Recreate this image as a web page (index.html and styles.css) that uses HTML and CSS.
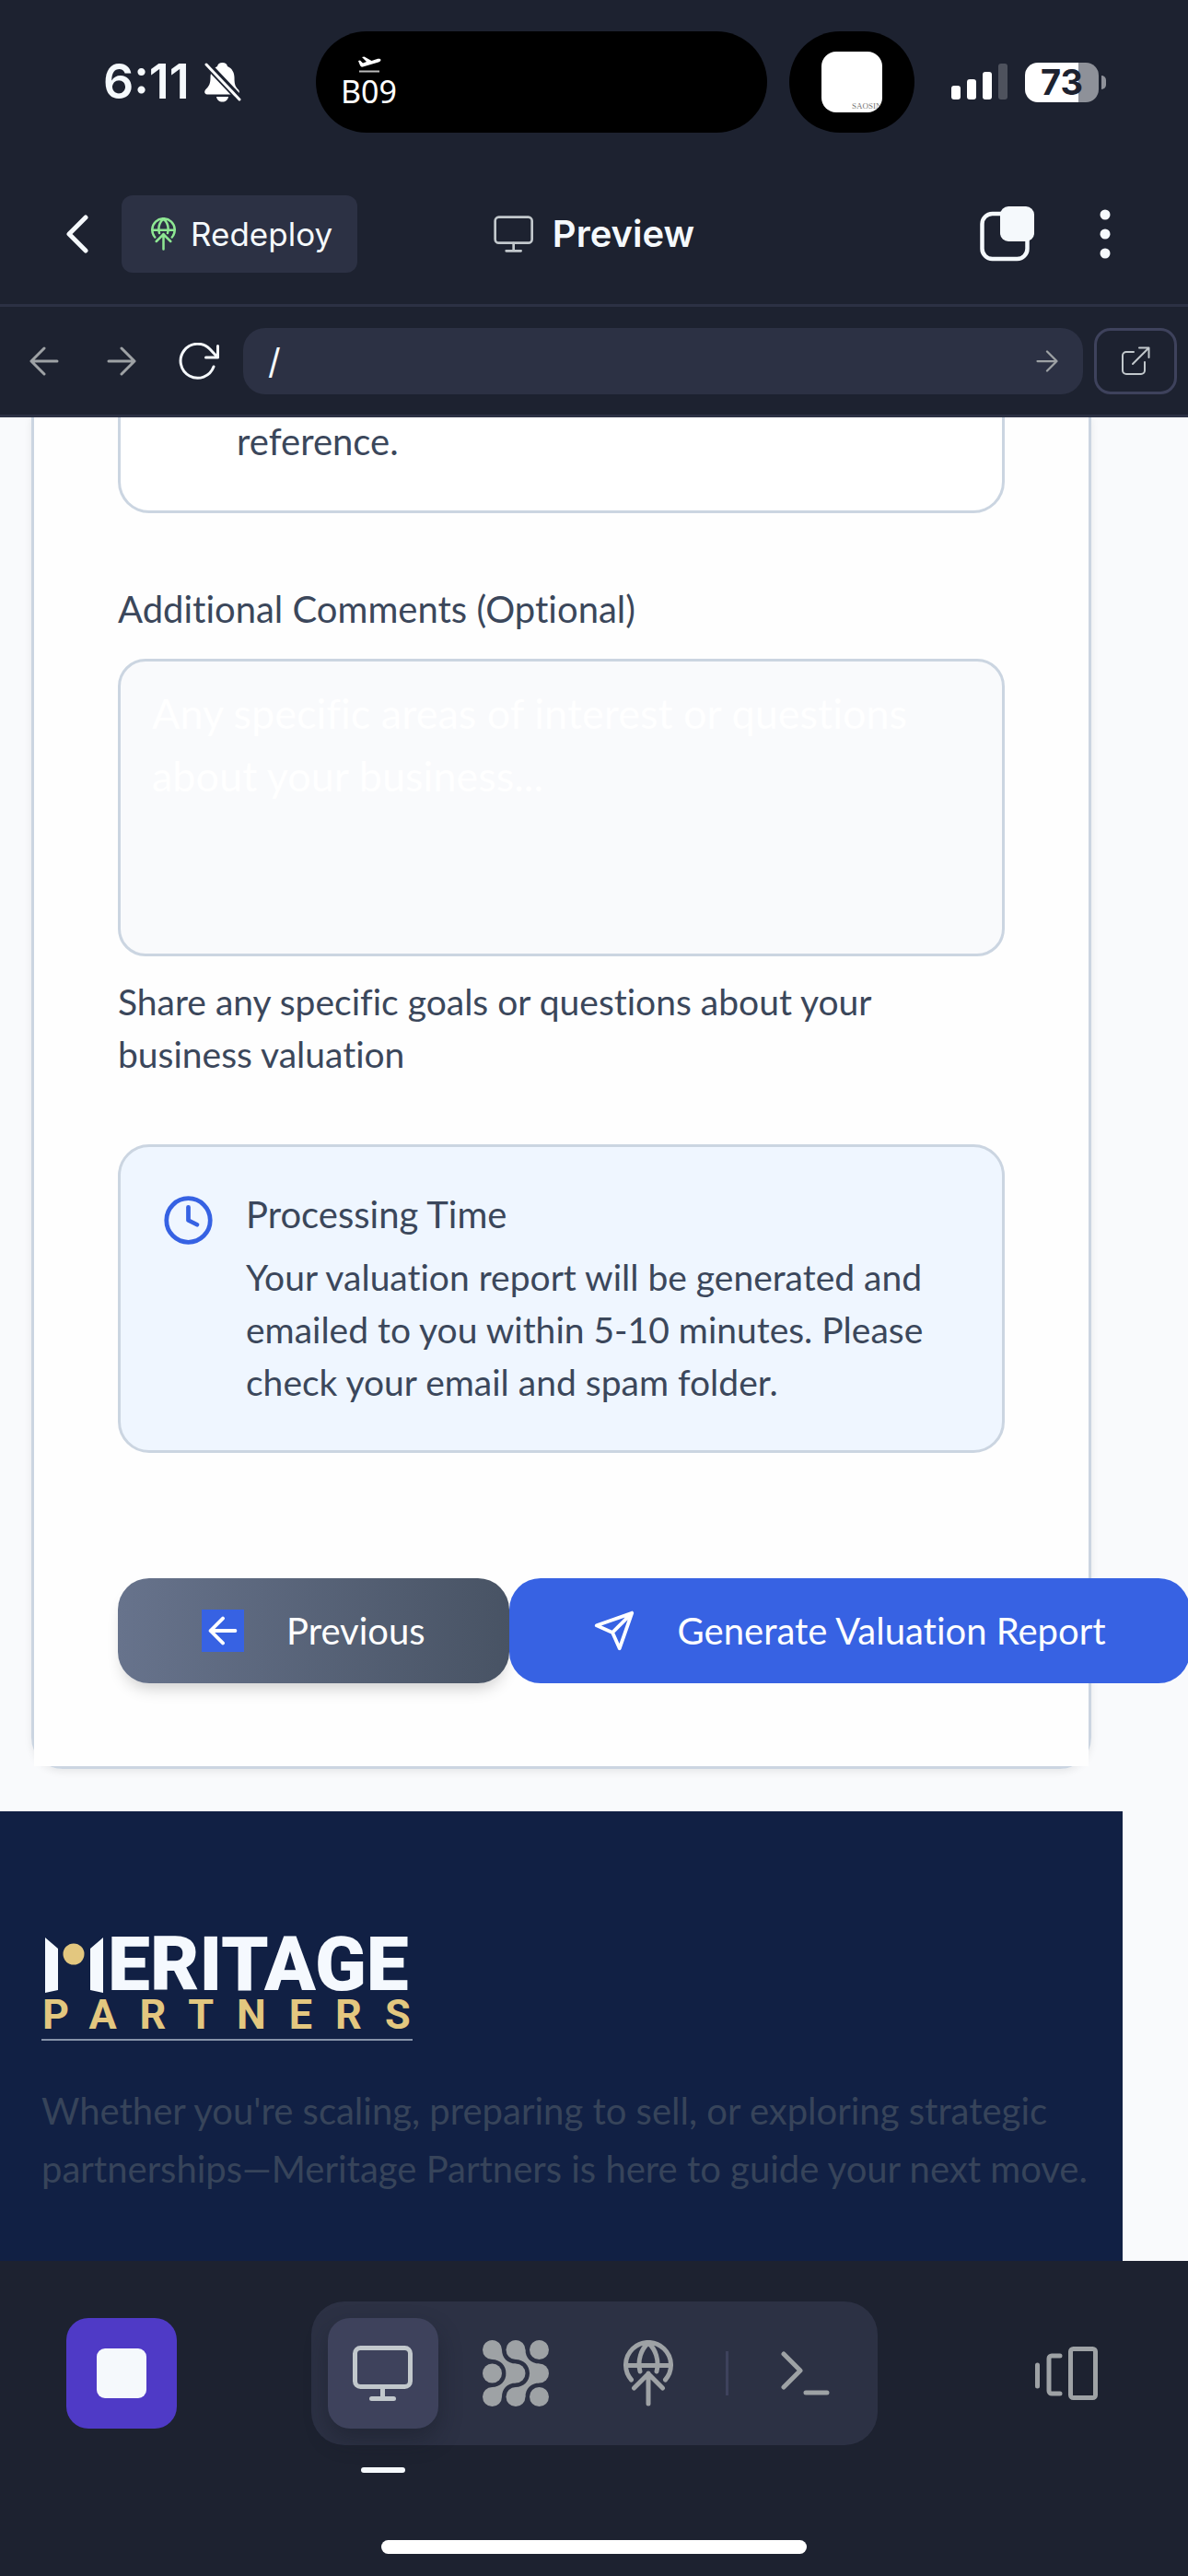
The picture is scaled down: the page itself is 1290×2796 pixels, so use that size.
FILE: index.html
```html
<!DOCTYPE html>
<html lang="en">
<head>
<meta charset="utf-8">
<meta name="viewport" content="width=device-width, initial-scale=1">
<title>Preview</title>
<link rel="stylesheet" href="styles.css">
</head>
<body>
<svg class="defs" aria-hidden="true">
  <symbol id="monitor" viewBox="0 0 66 60">
    <rect x="2.5" y="2.5" width="60" height="42" rx="6"/>
    <path d="M32.5 45v12M20.500 57.500h24"/>
  </symbol>
  <symbol id="globe-up" viewBox="0 0 54 72">
    <path d="M8.500 43A24.500 24.500 0 1 1 45.500 43M2.500 27.500h49M18 34C15 22 19 10 27 3c8 7 12 19 9 31M27 69V36M11.500 52 27 36.500 42.500 52"/>
  </symbol>
  <symbol id="arrow-left" viewBox="0 0 32 32">
    <path d="M30 16H2M16 2 2 16l14 14"/>
  </symbol>
  <symbol id="arrow-right" viewBox="0 0 32 32">
    <path d="M2 16h28M16 2l14 14-14 14"/>
  </symbol>
</svg>

<div class="status">
  <div class="status-time">
    <span>6:11</span>
    <svg class="bell" viewBox="0 0 40 44" aria-hidden="true">
      <path fill="#fff" d="M19.500 1c3 0 5 1.500 5.500 4 5 2 7.500 7 7.500 12 0 8 1 10 4.500 13.500 1.500 1.500 1 5-2 5H3c-3 0-3.500-3-2-5C5 26.500 6.500 24 6.500 17c0-5 2.500-10 7.500-12 .5-2.500 2.500-4 5.500-4zM13 38h13c-.5 3.500-3 5.500-6.500 5.500S13.500 41.500 13 38z"/>
      <path stroke="#1d2230" stroke-width="8" d="M1 1l38 40"/>
      <path stroke="#fff" stroke-width="3" stroke-linecap="round" d="M2 3l36 38"/>
    </svg>
  </div>
  <div class="islands">
    <div class="island island-main">
      <div class="flight">
        <svg class="plane" viewBox="0 0 26 18" aria-hidden="true">
          <path fill="#fff" d="M1 5l2-.5 3 3L10 6 5 1l2.500-.5 8 4.500 6-2c2-.6 4 0 4 1 0 1.200-1 2-2.500 2.500L6 11.500C4.500 12 3.500 11 3 10z"/>
          <path fill="#bbb" d="M2 15.500h22v2H2z"/>
        </svg>
        <span>B09</span>
      </div>
    </div>
    <div class="island island-side"><div class="album"><span>SAOSIN</span></div></div>
  </div>
  <div class="status-right">
    <svg class="signal" viewBox="0 0 62 40" aria-hidden="true">
      <g fill="#fff"><rect y="24" width="10" height="15" rx="3"/><rect x="17" y="17" width="10" height="22" rx="3"/><rect x="34" y="9" width="10" height="30" rx="3"/><rect x="51" width="10" height="39" rx="3" opacity=".22"/></g>
    </svg>
    <div class="battery"><span>73</span></div>
  </div>
</div>

<header class="header">
  <div class="header-left">
    <button class="icon-button back" aria-label="Back">
      <svg viewBox="0 0 24 42" width="24" height="42"><path d="M21 3 3 21l18 18" stroke-width="5"/></svg>
    </button>
    <button class="redeploy">
      <svg class="green" width="27" height="36" stroke-width="5"><use href="#globe-up"/></svg>
      <span>Redeploy</span>
    </button>
  </div>
  <h1 class="title">
    <svg width="44" height="40" stroke-width="4"><use href="#monitor"/></svg>
    <span>Preview</span>
  </h1>
  <div class="header-right">
    <button class="icon-button" aria-label="Duplicate">
      <svg viewBox="0 0 60 60" width="60" height="60"><rect x="2.500" y="8" width="49" height="49" rx="11" stroke-width="4.500"/><rect x="22" y="0" width="37" height="38" rx="9" fill="#f5f9fc" stroke="none"/></svg>
    </button>
    <button class="icon-button" aria-label="More">
      <svg viewBox="0 0 12 54" width="12" height="54"><g fill="#f5f9fc" stroke="none"><circle cx="6" cy="6" r="5.500"/><circle cx="6" cy="27" r="5.500"/><circle cx="6" cy="48" r="5.500"/></g></svg>
    </button>
  </div>
</header>

<nav class="address">
  <button class="icon-button dim" aria-label="Go back"><svg width="32" height="32" stroke-width="3"><use href="#arrow-left"/></svg></button>
  <button class="icon-button dim" aria-label="Go forward"><svg width="32" height="32" stroke-width="3"><use href="#arrow-right"/></svg></button>
  <button class="icon-button" aria-label="Reload"><svg viewBox="0 0 44 40" width="44" height="40" stroke-width="3"><path d="M38 26A18.500 18.500 0 1 1 34 7l8.500 9M42.500 3.500V16H29.500"/></svg></button>
  <div class="url">
    <input type="text" value="/" aria-label="Path">
    <button class="icon-button dim" aria-label="Go"><svg width="24" height="24" stroke-width="3"><use href="#arrow-right"/></svg></button>
  </div>
  <button class="external" aria-label="Open in new tab">
    <svg viewBox="0 0 32 32" width="32" height="32" stroke-width="2"><path d="M14 6H6a4 4 0 0 0-4 4v16a4 4 0 0 0 4 4h16a4 4 0 0 0 4-4V17M20 1.500h10.500V12M30 2 13 19"/></svg>
  </button>
</nav>

<main class="page">
  <form class="card">
    <div class="card-body">
      <div class="consent"><p>reference.</p></div>
      <div class="field">
        <label for="comments">Additional Comments (Optional)</label>
        <textarea id="comments" placeholder="Any specific areas of interest or questions about your business..."></textarea>
        <p class="copy">Share any specific goals or questions about your business valuation</p>
      </div>
      <div class="notice">
        <svg class="clock" viewBox="0 0 24 24" width="57" height="57" stroke-width="2" aria-hidden="true"><circle cx="12" cy="12" r="10"/><path d="M12 6v6l4 2"/></svg>
        <div>
          <h2>Processing Time</h2>
          <p class="copy">Your valuation report will be generated and emailed to you within 5-10 minutes. Please check your email and spam folder.</p>
        </div>
      </div>
      <div class="actions">
        <button class="action previous" type="button">
          <svg class="boxed" viewBox="0 0 24 24" width="46" height="46" stroke-width="2"><path d="m12 19-7-7 7-7M19 12H5"/></svg>
          <span>Previous</span>
        </button>
        <button class="action generate" type="button">
          <svg viewBox="0 0 24 24" width="46" height="46" stroke-width="2"><path d="M22 2 15 22l-4-9-9-4ZM22 2 11 13"/></svg>
          <span>Generate Valuation Report</span>
        </button>
      </div>
    </div>
  </form>
  <footer class="footer">
    <svg class="logo" viewBox="0 0 404 120" width="404" height="120" role="img" aria-label="Meritage Partners">
      <path fill="#f5f9fe" d="M4 7l14 12v45l-14 3zM67 7 53 19v45l14 3z"/>
      <circle cx="35" cy="25" r="11.500" fill="#e3c77f"/>
      <text class="logo-top" x="72" y="64">ERITAGE</text>
      <text class="logo-bottom" x="1" y="106">PARTNERS</text>
      <path fill="#8592a8" d="M0 117h403v2H0z"/>
    </svg>
    <p>Whether you're scaling, preparing to sell, or exploring strategic partnerships—Meritage Partners is here to guide your next move.</p>
  </footer>
</main>

<nav class="dock">
  <div class="dock-row">
    <button class="tile stop" aria-label="Stop"><span></span></button>
    <div class="group">
      <button class="tile active" aria-label="Preview"><svg width="66" height="60" stroke-width="5"><use href="#monitor"/></svg></button>
      <button class="tile" aria-label="Agent">
        <svg viewBox="0 0 72 72" width="72" height="72"><g fill="#9ea2a5" stroke="none">
          <circle cx="10.500" cy="10.500" r="10.500"/><circle cx="36" cy="10.500" r="10.500"/><circle cx="61.500" cy="10.500" r="10.500"/>
          <circle cx="10.500" cy="36" r="10.500"/><circle cx="36" cy="36" r="10.500"/><circle cx="61.500" cy="36" r="10.500"/>
          <circle cx="10.500" cy="61.500" r="10.500"/><circle cx="36" cy="61.500" r="10.500"/><circle cx="61.500" cy="61.500" r="10.500"/>
          <path d="M21 10.500C21 19 27 25.500 36 25.500L25.500 36C25.500 27.500 19 21 10.500 21ZM46.500 10.500C46.500 19 52.500 25.500 61.500 25.500L51 36C51 27.500 44.500 21 36 21ZM21 61.500C21 53 27 46.500 36 46.500L25.500 36C25.500 44.500 19 51 10.500 51ZM46.500 61.500C46.500 53 52.500 46.500 61.500 46.500L51 36C51 44.500 44.500 51 36 51Z"/>
        </g></svg>
      </button>
      <button class="tile" aria-label="Deployments"><svg width="54" height="72" stroke-width="5"><use href="#globe-up"/></svg></button>
      <span class="divider"></span>
      <button class="tile" aria-label="Shell"><svg viewBox="0 0 54 48" width="54" height="48" stroke-width="5"><path d="M3 3l18 18L3 39M27 45h23"/></svg></button>
    </div>
    <button class="tile" aria-label="Switch tabs">
      <svg viewBox="0 0 68 58" width="68" height="58" stroke-width="5"><rect x="38.500" y="2.500" width="27" height="53" rx="3"/><path d="M27 10H18a3 3 0 0 0-3 3v35a3 3 0 0 0 3 3h9M2.500 20v23"/></svg>
    </button>
  </div>
  <div class="indicator"></div>
  <div class="home"></div>
</nav>
</body>
</html>
```
FILE: styles.css
```css
*, *::before, *::after { box-sizing: border-box; }

body {
  margin: 0;
  min-height: 100vh;
  display: flex;
  flex-direction: column;
  background: #1d2230;
  color: #f5f9fc;
  font-family: Inter, "Liberation Sans", sans-serif;
}

h1, h2, p { margin: 0; font-weight: 400; }
button, input, textarea { font: inherit; color: inherit; border: 0; padding: 0; background: none; }
svg { display: block; flex: none; fill: none; stroke: currentColor; stroke-linecap: round; stroke-linejoin: round; }
.defs { position: absolute; width: 0; height: 0; }

/* Status bar */
.status {
  display: grid;
  grid-template-columns: 1fr auto 1fr;
  align-items: center;
  padding: 34px 0 0 46px;
}
.status-time { display: flex; align-items: center; gap: 16px; padding-left: 66px; font-size: 52px; line-height: 60px; font-weight: 600; }
.status-time svg { stroke: none; width: 40px; height: 44px; }
.islands { display: flex; gap: 24px; }
.island { height: 110px; border-radius: 55px; background: #000; display: flex; align-items: center; }
.island-main { width: 490px; padding-left: 27px; }
.island-side { width: 136px; justify-content: center; }
.flight { display: flex; flex-direction: column; align-items: center; gap: 2px; font-family: "Noto Sans", sans-serif; font-size: 34px; line-height: 36px; color: #fff; }
.plane { width: 26px; height: 18px; stroke: none; }
.album { width: 66px; height: 66px; border-radius: 16px; background: #fff; overflow: hidden; display: flex; align-items: flex-end; padding-left: 33px; font: 9px/14px "Liberation Serif", serif; color: #777; }
.status-right { display: flex; align-items: center; gap: 18px; padding-left: 40px; }
.signal { width: 62px; height: 40px; stroke: none; }
.battery {
  position: relative;
  width: 80px;
  height: 43px;
  border-radius: 14px;
  background: linear-gradient(to right, #fff 73%, #8e9199 73%);
  color: #1d2230;
  font-size: 38px;
  line-height: 43px;
  font-weight: 700;
  text-align: center;
}
.battery::after { content: ""; position: absolute; left: 83px; top: 14px; width: 5px; height: 15px; border-radius: 0 8px 8px 0; background: #8e9199; }

/* Header */
.icon-button { display: flex; align-items: center; justify-content: center; }
.header {
  display: grid;
  grid-template-columns: 1fr auto 1fr;
  align-items: center;
  padding: 68px 84px 34px 72px;
  border-bottom: 3px solid #2c3144;
}
.header-left { display: flex; gap: 36px; }
.redeploy { display: flex; align-items: center; gap: 16px; height: 84px; padding: 0 27px 0 32px; border-radius: 12px; background: #2c3144; font-size: 35px; line-height: 40px; }
.green { color: #8ee793; }
.title { display: flex; align-items: center; gap: 20px; padding-left: 12px; font-size: 40px; line-height: 48px; font-weight: 600; }
.title svg { color: #c2c8cc; }
.header-right { display: flex; justify-content: flex-end; gap: 70px; }

/* Address bar */
.address { display: flex; align-items: center; padding: 23px 12px 22px 6px; border-bottom: 3px solid #2c3144; }
.address > .icon-button { width: 84px; height: 72px; }
.dim { color: #9ea2a5; }
.url { flex: 1; display: flex; align-items: center; height: 72px; margin-left: 6px; padding: 0 27px; border-radius: 24px; background: #2c3144; }
.url input { flex: 1; min-width: 0; font-size: 38px; line-height: 48px; outline: 0; }
.external { display: flex; align-items: center; justify-content: center; width: 90px; height: 72px; margin-left: 12px; border: 3px solid #3e425c; border-radius: 18px; color: #c2c8cc; }

/* Previewed page */
.page {
  flex: 1;
  display: flex;
  flex-direction: column;
  overflow: hidden;
  padding-right: 71px;
  background: #f9fafc;
  color: #3b475b;
  font-family: Lato, sans-serif;
  font-size: 40px;
  font-variant-ligatures: no-common-ligatures;
  line-height: 57px;
}
.card { margin: -2px 34px 46px; border: 3px solid #cbd5e1; border-top: 0; border-radius: 0 0 34px 34px; box-shadow: 0 3px 9px rgba(0, 0, 0, .08); }
.card-body { padding: 0 91px 90px; background: #fefefe; }
.consent { padding: 0 126px 46px; border: 3px solid #cbd5e1; border-top: 0; border-radius: 0 0 34px 34px; background: #fff; }
.field { display: flex; flex-direction: column; padding: 76px 0 69px; }
.field textarea {
  height: 323px;
  margin: 25px 0 21px;
  padding: 22px 34px;
  border: 3px solid #cbd5e1;
  border-radius: 30px;
  background: #f9fafc;
  font-size: 45px;
  line-height: 68px;
  resize: none;
  outline: 0;
}
.field textarea::placeholder { color: #fff; opacity: 1; }
.copy { font-size: 39px; }
.notice { display: flex; gap: 34px; padding: 45px; border: 3px solid #cbd5e1; border-radius: 34px; background: #eff6ff; }
.notice h2 { font-size: 40px; margin-bottom: 11px; }
.clock { margin-top: 6px; color: #3662e3; }
.actions { display: flex; padding-top: 136px; }
.action { flex: none; display: flex; align-items: center; gap: 46px; height: 114px; padding: 0 91px; border-radius: 34px; color: #fff; white-space: nowrap; }
.previous { background: linear-gradient(to right, #67738c, #485364); box-shadow: 0 11px 17px -6px rgba(0, 0, 0, .2); }
.generate { background: #3762e3; }
.boxed { background: #3762e3; }

.footer { flex: 1; padding: 130px 24px 64px 45px; background: #112044; color: #37445a; line-height: 63px; }
.footer p { margin-top: 44px; }
.logo { overflow: visible; stroke: none; font-family: Roboto, sans-serif; font-weight: 700; }
.logo-top { font-size: 82px; font-weight: 900; fill: #f5f9fe; }
.logo-bottom { font-size: 45px; fill: #e3c77f; letter-spacing: 25px; }

/* Bottom dock */
.dock { display: flex; flex-direction: column; align-items: center; padding: 44px 0 24px; }
.dock-row { align-self: stretch; display: flex; align-items: center; justify-content: space-between; padding: 0 72px; }
.tile { display: flex; align-items: center; justify-content: center; width: 120px; height: 120px; border-radius: 24px; color: #9ea2a5; }
.stop { background: #4f3ac6; }
.stop span { width: 54px; height: 54px; border-radius: 9px; background: #f5f9fc; }
.group { display: flex; align-items: center; gap: 24px; padding: 18px; border-radius: 36px; background: #2c3144; }
.active { background: #3e425c; color: #c2c8cc; box-shadow: 0 12px 24px rgba(20, 24, 34, .4); }
.divider { width: 3px; height: 48px; background: #3e425c; }
.indicator { align-self: flex-start; width: 48px; height: 6px; margin: 24px 0 73px 392px; border-radius: 3px; background: #f5f9fc; }
.home { width: 462px; height: 15px; border-radius: 8px; background: #fff; }
```
